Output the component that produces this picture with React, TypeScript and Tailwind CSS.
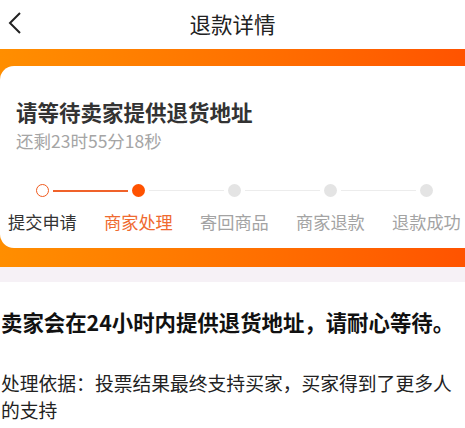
const steps = [
  { label: "提交申请", state: "done" },
  { label: "商家处理", state: "current" },
  { label: "寄回商品", state: "todo" },
  { label: "商家退款", state: "todo" },
  { label: "退款成功", state: "todo" },
];

const font = { fontFamily: '"Noto Sans CJK SC", "Noto Sans", sans-serif' };

export default function App() {
  return (
    <div className="w-[465px] h-[428px] overflow-hidden bg-white" style={font}>
      {/* header */}
      <div className="relative h-[49px] flex items-center justify-center">
        <svg
          className="absolute left-[7px] top-[12px]"
          width="16"
          height="22"
          viewBox="0 0 16 22"
          fill="none"
        >
          <path d="M13 1 L3 11 L13 21" stroke="#222" strokeWidth="2" />
        </svg>
        <span className="text-[21.5px] leading-[30px] text-[#222] -mt-[2px]">退款详情</span>
      </div>

      {/* orange band with card */}
      <div className="pt-[17px] pb-[19px] bg-gradient-to-r from-[#ff8e00] to-[#ff5300]">
        <div className="h-[182px] bg-white rounded-l-[14px] pt-[31px] pl-[16px]">
          <div className="text-[21.5px] leading-[30px] font-bold text-[#333]">请等待卖家提供退货地址</div>
          <div className="mt-[2px] text-[17.5px] leading-[24px] text-[#a5a5a5]">还剩23时55分18秒</div>

          <div className="mt-[31px] -ml-[16px] flex items-center pl-[36px]">
            <div className="w-[13px] h-[13px] rounded-full border-[1.5px] border-[#f05a1e] bg-white" />
            <div className="w-[75px] h-[2px] mx-[4px] bg-[#f0622a]" />
            <div className="w-[13px] h-[13px] rounded-full bg-[#ff5200]" />
            <div className="w-[75px] h-[1px] mx-[4px] bg-[#ececec]" />
            <div className="w-[13px] h-[13px] rounded-full bg-[#e4e4e4]" />
            <div className="w-[75px] h-[1px] mx-[4px] bg-[#ececec]" />
            <div className="w-[13px] h-[13px] rounded-full bg-[#e4e4e4]" />
            <div className="w-[75px] h-[1px] mx-[4px] bg-[#ececec]" />
            <div className="w-[13px] h-[13px] rounded-full bg-[#e4e4e4]" />
          </div>

          <div className="mt-[13px] -ml-[8px] flex gap-[27px]">
            {steps.map((s) => (
              <span
                key={s.label}
                className={
                  "w-[69px] shrink-0 whitespace-nowrap text-[17.2px] leading-[24px] " +
                  (s.state === "done"
                    ? "text-[#333]"
                    : s.state === "current"
                    ? "text-[#ef6a2f]"
                    : "text-[#a3a3a3]")
                }
              >
                {s.label}
              </span>
            ))}
          </div>
        </div>
      </div>

      <div className="h-[15px] bg-[#f6f1f6]" />

      <div className="pl-[1px]">
        <div className="mt-[25px] text-[21.4px] leading-[30px] font-bold text-[#111] whitespace-nowrap">
          卖家会在24小时内提供退货地址，请耐心等待。
        </div>
        <div className="mt-[32px] text-[18.8px] leading-[27px] text-[#222]">
          处理依据：投票结果最终支持买家，买家得到了更多人的支持
        </div>
      </div>
    </div>
  );
}
